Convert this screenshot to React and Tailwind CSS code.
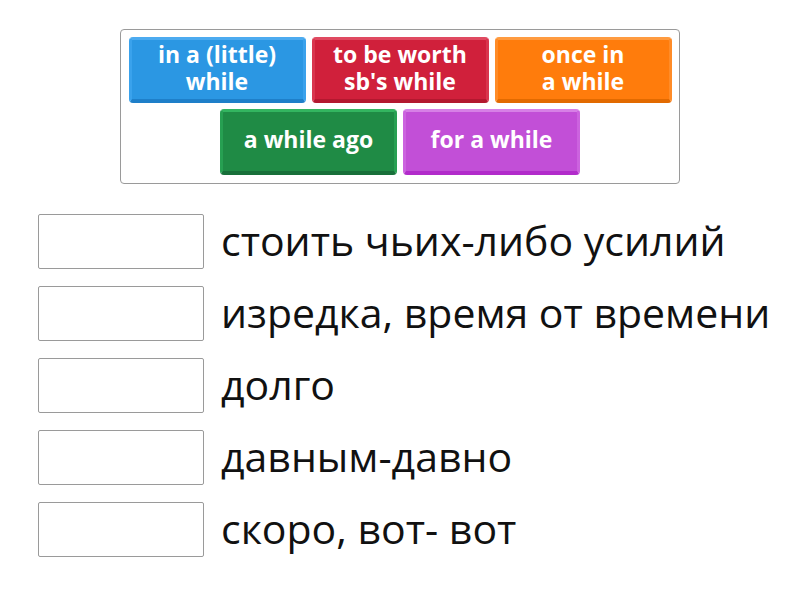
const tiles = [
  [
    { text: ["in a (little)", "while"], cls: "bg-[#2b97e3] border-t-[#4cabf0] border-x-[#3aa2ec] border-b-[#1e7fc9]" },
    { text: ["to be worth", "sb's while"], cls: "bg-[#d0203b] border-t-[#e04a61] border-x-[#d9354e] border-b-[#b3182f]" },
    { text: ["once in", "a while"], cls: "bg-[#ff7c0c] border-t-[#ff9b40] border-x-[#ff8c28] border-b-[#e26a00]" },
  ],
  [
    { text: ["a while ago"], cls: "bg-[#1f8b45] border-t-[#33b560] border-x-[#27a052] border-b-[#18703a]" },
    { text: ["for a while"], cls: "bg-[#c24fd7] border-t-[#d780e6] border-x-[#cc63df] border-b-[#b22bcb]" },
  ],
];

const answers = [
  "стоить чьих-либо усилий",
  "изредка, время от времени",
  "долго",
  "давным-давно",
  "скоро, вот- вот",
];

const Tile = ({ text, cls }) => (
  <div
    className={`w-[177px] h-[66px] pb-[4px] rounded-[4px] border-t-[3px] border-x-[3px] border-b-[4px] flex items-center justify-center text-white font-bold text-[23px] leading-[27px] ${cls}`}
  >
    <p className="text-center">
      {text[0]}
      {text[1] && (
        <>
          <br />
          {text[1]}
        </>
      )}
    </p>
  </div>
);

const App = () => {
  return (
    <div className="w-[800px] h-[600px] bg-white font-['Open_Sans',sans-serif]">
      <div className="pt-[29px] flex justify-center">
        <div className="w-[560px] h-[155px] border border-[#9a9a9a] rounded-[4px] pt-[7px] flex flex-col items-center gap-[6px]">
          {tiles.map((row, i) => (
            <div key={i} className="flex gap-[6px]">
              {row.map((t) => (
                <Tile key={t.text.join()} {...t} />
              ))}
            </div>
          ))}
        </div>
      </div>

      <div className="pl-[38px] pt-[30px] flex flex-col gap-[17px]">
        {answers.map((a) => (
          <div key={a} className="flex items-center gap-[17px]">
            <div className="w-[166px] h-[55px] border border-[#9a9a9a] rounded-[2px] bg-white shrink-0" />
            <span className="text-[41px] text-[#111] leading-[52px] pb-[3px] whitespace-nowrap">{a}</span>
          </div>
        ))}
      </div>
    </div>
  );
};

export default App;
